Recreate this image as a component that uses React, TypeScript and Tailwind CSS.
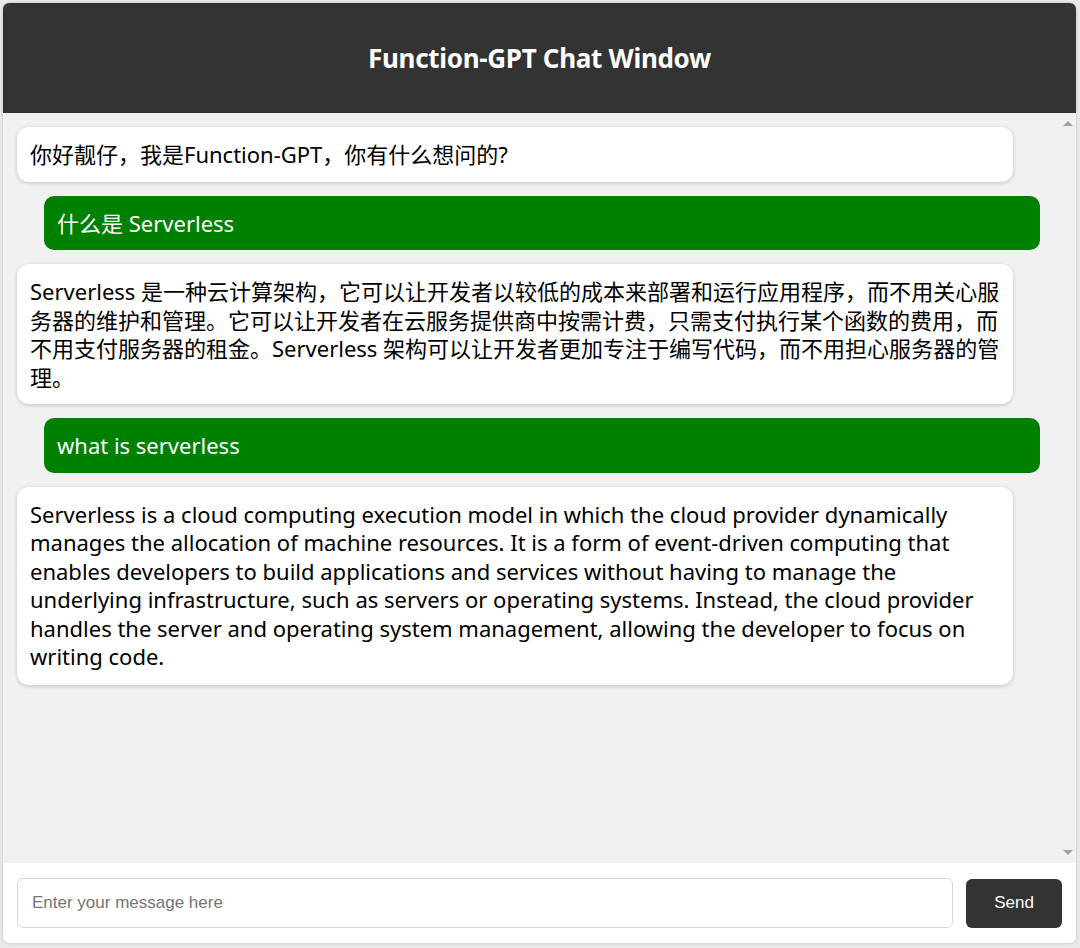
export default function App() {
  const font = { fontFamily: '"Noto Sans", "Noto Sans CJK SC", sans-serif' };
  const bot = "bg-white rounded-[12px] shadow-[0_1px_4px_rgba(0,0,0,0.2)] px-[13px] py-[13px] ml-[14px] mr-[47px] text-[22px] leading-[28.5px] text-black";
  const me = "bg-[#008000] rounded-[10px] px-[13px] py-[13px] ml-[41px] mr-[20px] text-[22px] leading-[28.5px] text-white";
  return (
    <div className="w-[1080px] h-[948px] bg-[#e9e9e9] p-[3px] pb-[5px]" style={font}>
      <div className="w-[1073px] h-[940px] rounded-[6px] overflow-hidden flex flex-col bg-white shadow-[0_0_3px_rgba(0,0,0,0.2)]">
        <div className="h-[110px] shrink-0 bg-[#333333] flex items-center justify-center text-white text-[26px] font-bold tracking-[-0.3px]">
          Function-GPT Chat Window
        </div>
        <div className="h-[750px] shrink-0 bg-[#f1f1f1] flex">
          <div className="flex-1 flex flex-col gap-[14px] pt-[14px]">
            <div className={bot}>你好靓仔，我是Function-GPT，你有什么想问的?</div>
            <div className={me}>什么是 Serverless</div>
            <div className={bot}>Serverless 是一种云计算架构，它可以让开发者以较低的成本来部署和运行应用程序，而不用关心服务器的维护和管理。它可以让开发者在云服务提供商中按需计费，只需支付执行某个函数的费用，而不用支付服务器的租金。Serverless 架构可以让开发者更加专注于编写代码，而不用担心服务器的管理。</div>
            <div className={me}>what is serverless</div>
            <div className={bot + " pb-[14px]"}>Serverless is a cloud computing execution model in which the cloud provider dynamically manages the allocation of machine resources. It is a form of event-driven computing that enables developers to build applications and services without having to manage the underlying infrastructure, such as servers or operating systems. Instead, the cloud provider handles the server and operating system management, allowing the developer to focus on writing code.</div>
          </div>
          <div className="w-[16px] flex flex-col justify-between items-center py-[8px]">
            <div className="w-0 h-0 border-l-[5px] border-r-[5px] border-b-[5px] border-l-transparent border-r-transparent border-b-[#a3a3a3]" />
            <div className="w-0 h-0 border-l-[5px] border-r-[5px] border-t-[5px] border-l-transparent border-r-transparent border-t-[#a3a3a3]" />
          </div>
        </div>
        <div className="flex-1 flex items-center gap-[13px] px-[14px]">
          <input
            placeholder="Enter your message here"
            className="flex-1 h-[50px] border border-[#d6d6d6] rounded-[6px] px-[14px] text-[17px] placeholder-[#757575] outline-none"
            style={{ fontFamily: '"Liberation Sans", Arial, sans-serif' }}
          />
          <button
            className="w-[96px] h-[49px] bg-[#333333] text-white rounded-[6px] text-[17px]"
            style={{ fontFamily: '"Liberation Sans", Arial, sans-serif' }}
          >
            Send
          </button>
        </div>
      </div>
    </div>
  );
}
